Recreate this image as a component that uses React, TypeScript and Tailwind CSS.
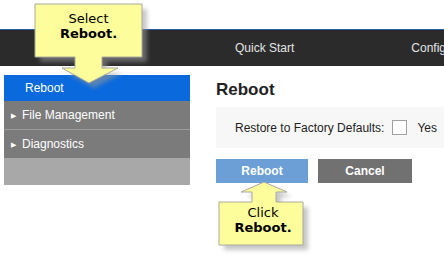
import React from "react";

function Callout({
  path,
  lines,
  className,
  id,
}: {
  path: string;
  lines: [string, string];
  className: string;
  id: string;
}) {
  return (
    <>
      <svg className="pointer-events-none absolute left-0 top-0" width={444} height={257}>
        <defs>
          <filter id={id} x="-20%" y="-20%" width="140%" height="140%">
            <feGaussianBlur stdDeviation="2" />
          </filter>
        </defs>
        <path d={path} transform="translate(5 5)" fill="#9a9a9a" opacity="0.55" filter={`url(#${id})`} />
        <path d={path} fill="#fdfd9c" stroke="#a9a9a0" strokeWidth="1" />
      </svg>
      <div
        className={`pointer-events-none absolute text-center text-[13px] leading-[15px] text-black ${className}`}
        style={{ fontFamily: '"DejaVu Sans", Verdana, sans-serif' }}
      >
        <div>{lines[0]}</div>
        <div className="font-bold">{lines[1]}</div>
      </div>
    </>
  );
}

export default function App() {
  return (
    <div
      className="relative h-[257px] w-[444px] overflow-hidden bg-white"
      style={{ fontFamily: '"Liberation Sans", Arial, sans-serif' }}
    >
      <div className="h-[29px]" />

      {/* Top nav */}
      <nav className="flex h-[37px] items-center overflow-hidden whitespace-nowrap border-t border-[#2a56a0] bg-[#2b2b2b] text-[12px] text-[#e4e4e4]">
        <span className="ml-[235px] shrink-0">Quick Start</span>
        <span className="ml-[117px] shrink-0">Configuration</span>
      </nav>

      <div className="mt-[9px] flex">
        {/* Sidebar */}
        <aside className="ml-[4px] w-[186px] text-[12px] text-white">
          <div className="flex h-[26px] items-center bg-[#0a69dc] pl-[21px]">Reboot</div>
          <div className="flex h-[29px] items-center gap-[6px] border-b border-[#9c9c9c] bg-[#7b7b7b] pl-[7px]">
            <span className="text-[7px] leading-none">▶</span>
            File Management
          </div>
          <div className="flex h-[28px] items-center gap-[6px] bg-[#7b7b7b] pl-[7px]">
            <span className="text-[7px] leading-none">▶</span>
            Diagnostics
          </div>
          <div className="h-[27px] bg-[#a8a8a8]" />
        </aside>

        {/* Main */}
        <main className="ml-[26px] flex-1">
          <h1 className="mt-[5px] h-[27px] text-[17px] font-bold leading-[20px] text-[#222]">Reboot</h1>
          <div className="flex h-[41px] items-center bg-[#f7f7f7] pl-[19px] text-[12px] text-[#222]">
            <span className="whitespace-nowrap">Restore to Factory Defaults:</span>
            <span className="ml-[8px] h-[15px] w-[15px] shrink-0 border border-[#a0a0a0] bg-white" />
            <span className="ml-[10px]">Yes</span>
          </div>
          <div className="mt-[11px] flex gap-[10px]">
            <button className="h-[24px] w-[92px] bg-[#6b9fd6] text-[12px] font-bold text-white">Reboot</button>
            <button className="h-[24px] w-[94px] bg-[#717171] text-[12px] font-bold text-white">Cancel</button>
          </div>
        </main>
      </div>

      <Callout
        id="shadowTop"
        path="M35,4 H142 V57 H102 V68 H118 L89,83 L62,68 H75 V57 H35 Z"
        lines={["Select", "Reboot."]}
        className="left-[35px] top-[11px] w-[107px]"
      />
      <Callout
        id="shadowBottom"
        path="M264,182 L287,192 H276 V202 H303 V245 H219 V202 H252 V192 H241 Z"
        lines={["Click", "Reboot."]}
        className="left-[219px] top-[205px] w-[88px]"
      />
    </div>
  );
}
